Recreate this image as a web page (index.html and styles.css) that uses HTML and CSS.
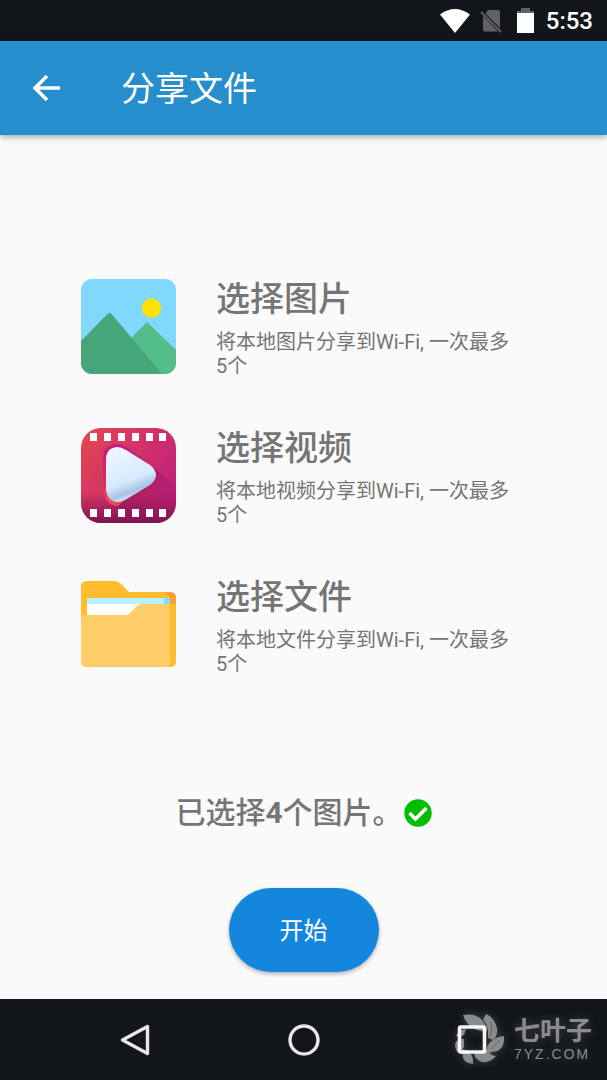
FILE: index.html
```html
<!DOCTYPE html>
<html lang="zh-CN">
<head>
<meta charset="utf-8">
<meta name="viewport" content="width=device-width, initial-scale=1">
<title>分享文件</title>
<link rel="stylesheet" href="styles.css">
</head>
<body>
<div class="screen">
  <div class="status-bar">
    <svg class="wifi" viewBox="0 0 30 24" aria-hidden="true"><path d="M0 5.5Q15-5.500 30 5.500L15 24Z" fill="#fff"/></svg>
    <svg class="sim" viewBox="0 0 22 24" aria-hidden="true"><path d="M8 1H18Q20 1 20 3V19L5.500 4.500ZM3 7L18 22.500H5Q3 22.500 3 20.500Z" fill="#606266"/><path d="M1 3L21 23" stroke="#606266" stroke-width="2"/></svg>
    <svg class="battery" viewBox="0 0 17 26" aria-hidden="true"><path d="M4 0H13V3H17V6H0V3H4Z" fill="#606266"/><path d="M0 5H17V25H0Z" fill="#fff"/></svg>
    <span class="clock">5:53</span>
  </div>

  <header class="app-bar">
    <button class="back" type="button" aria-label="返回">
      <svg viewBox="0 0 28 28" aria-hidden="true"><path d="M14 1L2 13L14 25M2 13H27" fill="none" stroke="#fff" stroke-width="3.400"/></svg>
    </button>
    <h1 class="title">分享文件</h1>
  </header>

  <main class="content">
    <div class="options">
      <button class="option" type="button">
        <svg class="option-icon" viewBox="0 0 95 95" aria-hidden="true">
          <defs><clipPath id="photo-clip"><rect width="95" height="95" rx="11"/></clipPath></defs>
          <g clip-path="url(#photo-clip)">
            <path d="M0 0H95V95H0Z" fill="#80d8fd"/>
            <path d="M46 63L66 43L95 71V95H46Z" fill="#53bd8a"/>
            <path d="M0 62L26.500 35Q28.500 33 30.500 35L81 95H0Z" fill="#46a67a"/>
            <circle cx="70.500" cy="29" r="9.700" fill="#ffe300"/>
          </g>
        </svg>
        <span class="option-text">
          <span class="option-title">选择图片</span>
          <span class="option-desc">将本地图片分享到Wi-Fi, 一次最多5个</span>
        </span>
      </button>

      <button class="option" type="button">
        <svg class="option-icon" viewBox="0 0 95 95" aria-hidden="true">
          <defs>
            <clipPath id="film-clip"><rect width="95" height="95" rx="20"/></clipPath>
            <linearGradient id="film-bg" x1="0" y1="0" x2="1" y2="0.700"><stop offset="0" stop-color="#e4494c"/><stop offset="0.500" stop-color="#d23368"/><stop offset="1" stop-color="#c01e7a"/></linearGradient>
            <linearGradient id="film-base" x1="0" y1="0" x2="0" y2="1"><stop offset="0.680" stop-color="#8a1553" stop-opacity="0"/><stop offset="1" stop-color="#7d134f"/></linearGradient>
            <linearGradient id="play-shadow" x1="0" y1="0" x2="1" y2="1"><stop offset="0.200" stop-color="#8c1459" stop-opacity="0.700"/><stop offset="0.900" stop-color="#a81b66" stop-opacity="0"/></linearGradient>
            <linearGradient id="play-edge" x1="0" y1="0" x2="0" y2="1"><stop offset="0.100" stop-color="#c51c80"/><stop offset="0.600" stop-color="#d52e61"/><stop offset="1" stop-color="#f05046"/></linearGradient>
            <linearGradient id="play-face" x1="0.200" y1="0" x2="0.550" y2="1"><stop offset="0" stop-color="#f1f6ff"/><stop offset="0.620" stop-color="#d6eaff"/><stop offset="0.820" stop-color="#a9c2e5"/><stop offset="0.950" stop-color="#dfefff"/></linearGradient>
          </defs>
          <g clip-path="url(#film-clip)">
            <path d="M0 0H95V95H0Z" fill="url(#film-bg)"/>
            <path d="M73 39L95 60V95H54L34 75Z" fill="url(#play-shadow)"/>
            <path d="M0 0H95V95H0Z" fill="url(#film-base)"/>
            <path d="M22 29Q23 16 36 16Q42 16 50 22L70 36L48 68L37 78Q24 77 22 63Z" fill="url(#play-edge)"/>
            <path d="M25 32Q25 20 36 19Q40 19 45 22L69 37Q81 47 69 57L44 72Q36 76 30 72Q25 68 25 61Z" fill="url(#play-face)"/>
            <g fill="#fff">
              <path d="M9 5H16V13H9ZM23 5H30V13H23ZM37 5H44V13H37ZM51 5H58V13H51ZM65 5H72V13H65ZM78 5H85V13H78Z"/>
              <path d="M9 81H16V89H9ZM23 81H30V89H23ZM37 81H44V89H37ZM51 81H58V89H51ZM65 81H72V89H65ZM78 81H85V89H78Z"/>
            </g>
          </g>
        </svg>
        <span class="option-text">
          <span class="option-title">选择视频</span>
          <span class="option-desc">将本地视频分享到Wi-Fi, 一次最多5个</span>
        </span>
      </button>

      <button class="option" type="button">
        <svg class="option-icon" viewBox="0 0 95 95" aria-hidden="true">
          <path d="M6 4H33Q37 4 39 6L48 15H89Q95 15 95 21V84Q95 90 89 90H6Q0 90 0 84V10Q0 4 6 4Z" fill="#ffbc2c"/>
          <path d="M84 15H89Q95 15 95 21V27H89V21Z" fill="#ff9f36"/>
          <path d="M6 21H89V27H6Z" fill="#baf0ff"/><path d="M83 21H89V27H83Z" fill="#82e0f8"/>
          <path d="M6 27H89V40H6Z" fill="#fff"/>
          <path d="M59 27H89V85Q89 90 84 90H6Q0 90 0 84V42Q0 38 5 38H46Q48 38 49 36L56 29Q58 27 60 27Z" fill="#fecd67"/>
        </svg>
        <span class="option-text">
          <span class="option-title">选择文件</span>
          <span class="option-desc">将本地文件分享到Wi-Fi, 一次最多5个</span>
        </span>
      </button>
    </div>

    <p class="selection">
      <span>已选择<b>4</b>个图片。</span>
      <svg class="check" viewBox="0 0 28 28" aria-hidden="true"><circle cx="14" cy="14" r="13.700" fill="#00bd00"/><path d="M5.500 14L11.500 20L22.500 9" fill="none" stroke="#fff" stroke-width="3.600"/></svg>
    </p>
    <button class="start" type="button">开始</button>
  </main>

  <nav class="nav-bar">
    <button class="nav-button" type="button" aria-label="后退"><svg viewBox="0 0 34 34" aria-hidden="true"><path d="M28.500 3.500V30.500L3.500 17Z" fill="none" stroke="#e8e8e8" stroke-width="3.400" stroke-linejoin="round"/></svg></button>
    <button class="nav-button" type="button" aria-label="主屏幕"><svg viewBox="0 0 34 34" aria-hidden="true"><circle cx="17" cy="17" r="14" fill="none" stroke="#e8e8e8" stroke-width="3.400"/></svg></button>
    <button class="nav-button" type="button" aria-label="最近任务"><svg viewBox="0 0 34 34" aria-hidden="true"><rect x="4.500" y="4" width="25" height="25" rx="1" fill="none" stroke="#f4f4f4" stroke-width="3.600"/></svg></button>
    <div class="watermark">
      <svg class="leaves" viewBox="0 0 50 50" aria-hidden="true">
        <g fill="#fff">
          <path d="M8 1Q20-1 26 5Q31 10 32 17Q14 18 8 1Z"/>
          <path d="M31 0Q39 3 42 14Q43 22 38 26L33 24V17Q32 9 28 6Z"/>
          <path d="M49 22Q50 38 36 38L32 41V33Q37 23 49 22Z"/>
          <path d="M41 42Q35 49 27 48Q21 46 19 40L32 35Q35 42 41 42Z"/>
          <path d="M18 50Q9 49 8 43L7 35L13 37Q19 42 18 50Z"/>
          <path d="M2 38Q-3 28 5 25H9V33Q7 37 2 38Z"/>
          <path d="M1 22Q4 15 11 15L9 21Q5 24 1 22Z"/>
        </g>
        <path d="M36 8Q38 16 35 23M45 26L36 35" fill="none" stroke="#999" stroke-width="0.800"/>
      </svg>
      <div class="brand"><span class="brand-name">七叶子</span><span class="brand-site">7YZ.COM</span></div>
    </div>
  </nav>
</div>
</body>
</html>
```
FILE: styles.css
```css
* {
  box-sizing: border-box;
}

body {
  margin: 0;
  background: #fafafa;
  color: #757575;
  font-family: Roboto, "Noto Sans CJK SC", sans-serif;
}

button {
  border: 0;
  padding: 0;
  background: none;
  color: inherit;
  font: inherit;
  cursor: pointer;
}

svg {
  display: block;
  flex: none;
}

.screen {
  display: flex;
  flex-direction: column;
  min-height: 100vh;
}

.status-bar {
  display: flex;
  align-items: center;
  justify-content: flex-end;
  height: 41px;
  padding-right: 14px;
  background: #12161b;
  color: #fff;
}

.wifi {
  width: 30px;
  height: 24px;
  margin-right: 10px;
}

.sim {
  width: 22px;
  height: 24px;
  margin-right: 15px;
}

.battery {
  width: 17px;
  height: 26px;
  margin-right: 12px;
}

.clock {
  font-size: 24px;
  font-weight: 500;
  line-height: 40px;
}

.app-bar {
  display: flex;
  align-items: center;
  gap: 60px;
  height: 94px;
  padding: 2px 33px 0;
  background: #268ecc;
  box-shadow: 0 2px 6px rgba(0, 0, 0, 0.35);
  color: #fff;
}

.back svg {
  width: 28px;
  height: 28px;
}

.title {
  margin: 0;
  font-size: 34px;
  font-weight: 400;
  line-height: 40px;
}

.content {
  display: flex;
  flex: 1;
  flex-direction: column;
  align-items: center;
  padding: 144px 81px 27px;
}

.options {
  display: flex;
  flex-direction: column;
  gap: 50px;
  width: 100%;
}

.option {
  display: flex;
  align-items: flex-start;
  gap: 40px;
  text-align: left;
}

.option-icon {
  width: 95px;
  height: 95px;
}

.option-text {
  display: flex;
  flex: 1;
  flex-direction: column;
  gap: 11px;
  padding-right: 12px;
}

.option-title {
  font-size: 34px;
  font-weight: 500;
  line-height: 40px;
}

.option-desc {
  font-size: 20px;
  line-height: 24px;
}

.selection {
  display: flex;
  align-items: center;
  gap: 1px;
  margin: 119px 0 57px;
  font-size: 30px;
  font-weight: 500;
  line-height: 36px;
}

.check {
  width: 28px;
  height: 28px;
}

.start {
  padding: 25px 51px 23px;
  border-radius: 42px;
  background: #1486dd;
  box-shadow: 0 2px 4px rgba(0, 0, 0, 0.3);
  color: #fff;
  font-size: 24px;
  font-weight: 400;
  line-height: 36px;
}

.nav-bar {
  position: relative;
  display: flex;
  align-items: center;
  justify-content: center;
  gap: 134px;
  height: 81px;
  background: #12161b;
}

.nav-button svg {
  width: 34px;
  height: 34px;
}

.watermark {
  position: absolute;
  right: 15px;
  bottom: 16px;
  display: flex;
  align-items: center;
  gap: 9px;
  color: #fff;
  filter: drop-shadow(0 0 5px rgba(255, 255, 255, 0.4));
  opacity: 0.5;
  pointer-events: none;
}

.leaves {
  width: 50px;
  height: 50px;
}

.brand {
  display: flex;
  flex-direction: column;
  gap: 3px;
}

.brand-name {
  font-size: 26px;
  font-weight: 700;
  line-height: 26px;
}

.brand-site {
  font-family: "Liberation Sans", sans-serif;
  font-size: 14px;
  letter-spacing: 2px;
  line-height: 14px;
}
```
